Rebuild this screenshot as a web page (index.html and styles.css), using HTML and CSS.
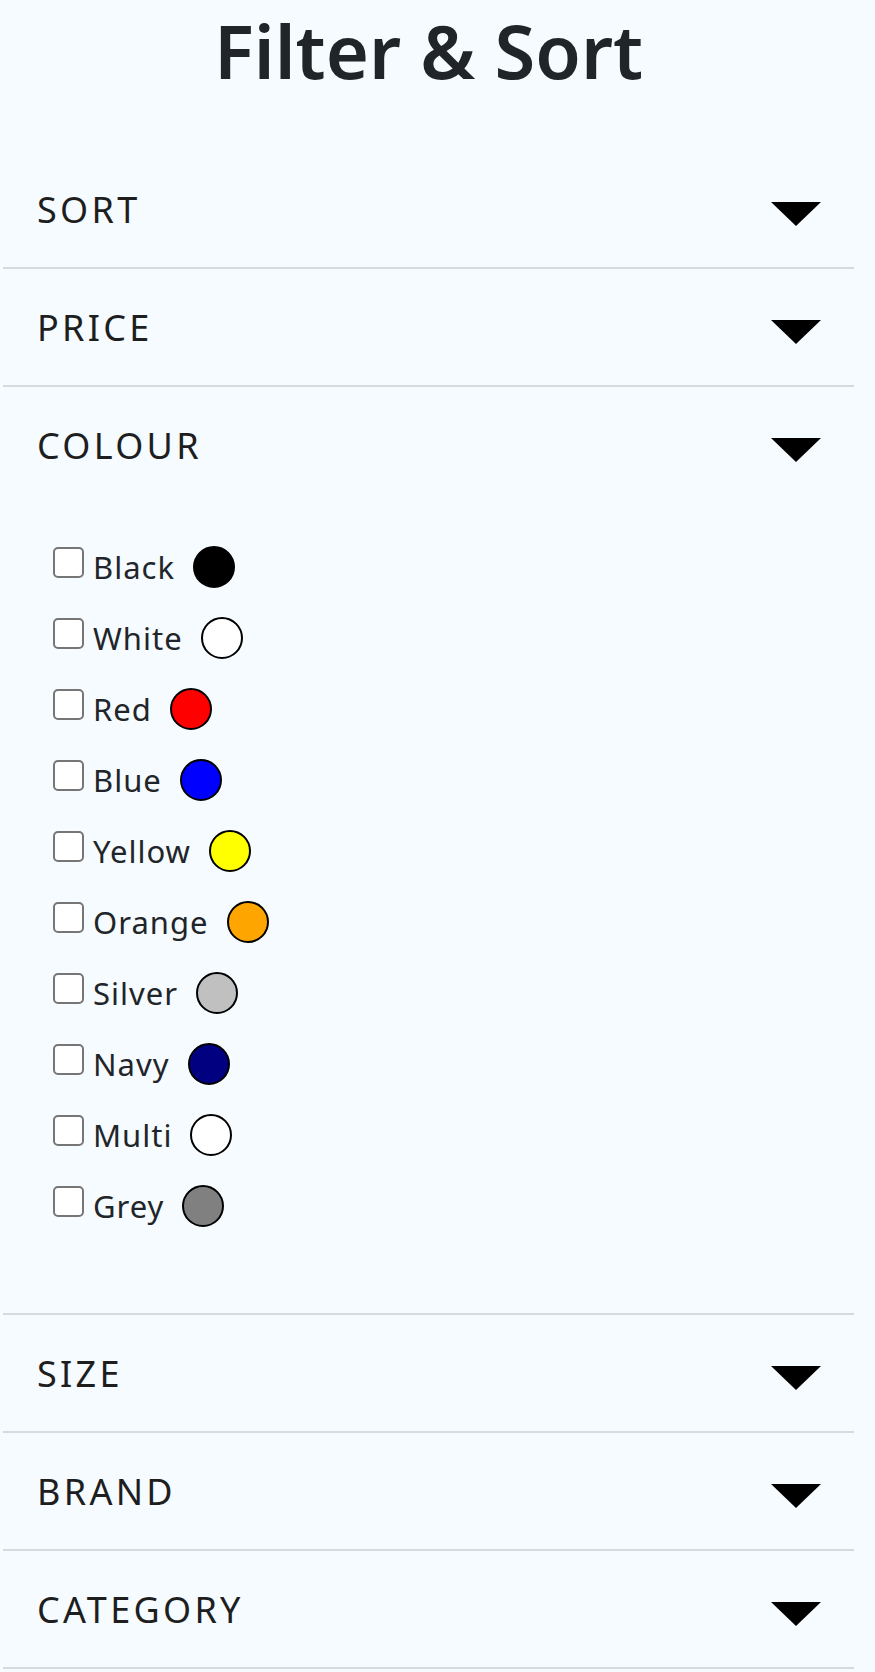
FILE: index.html
```html
<!DOCTYPE html>
<html lang="en">
<head>
    <meta charset="UTF-8">
    <meta name="viewport" content="width=device-width, initial-scale=1.0">
    <title>Filter &amp; Sort</title>
    <link rel="stylesheet" href="styles.css">
</head>
<body>

<div id="filters">
    <h1 class="title">Filter &amp; Sort</h1>

    <div class="filter-list">
        <div class="filter">
            <div class="filter-head">
                <span class="filter-name">SORT</span>
                <span class="caret"></span>
            </div>
        </div>

        <div class="filter">
            <div class="filter-head">
                <span class="filter-name">PRICE</span>
                <span class="caret"></span>
            </div>
        </div>

        <div class="filter">
            <div class="filter-head">
                <span class="filter-name">COLOUR</span>
                <span class="caret"></span>
            </div>
            <ul class="colour-list">
                <li><input type="checkbox" id="c-black"><label for="c-black">Black</label><span class="swatch" style="background:#000000"></span></li>
                <li><input type="checkbox" id="c-white"><label for="c-white">White</label><span class="swatch" style="background:#ffffff"></span></li>
                <li><input type="checkbox" id="c-red"><label for="c-red">Red</label><span class="swatch" style="background:#ff0000"></span></li>
                <li><input type="checkbox" id="c-blue"><label for="c-blue">Blue</label><span class="swatch" style="background:#0000ff"></span></li>
                <li><input type="checkbox" id="c-yellow"><label for="c-yellow">Yellow</label><span class="swatch" style="background:#ffff00"></span></li>
                <li><input type="checkbox" id="c-orange"><label for="c-orange">Orange</label><span class="swatch" style="background:#ffa500"></span></li>
                <li><input type="checkbox" id="c-silver"><label for="c-silver">Silver</label><span class="swatch" style="background:#c0c0c0"></span></li>
                <li><input type="checkbox" id="c-navy"><label for="c-navy">Navy</label><span class="swatch" style="background:#000080"></span></li>
                <li><input type="checkbox" id="c-multi"><label for="c-multi">Multi</label><span class="swatch" style="background:#ffffff"></span></li>
                <li><input type="checkbox" id="c-grey"><label for="c-grey">Grey</label><span class="swatch" style="background:#808080"></span></li>
            </ul>
        </div>

        <div class="filter">
            <div class="filter-head">
                <span class="filter-name">SIZE</span>
                <span class="caret"></span>
            </div>
        </div>

        <div class="filter">
            <div class="filter-head">
                <span class="filter-name">BRAND</span>
                <span class="caret"></span>
            </div>
        </div>

        <div class="filter">
            <div class="filter-head">
                <span class="filter-name">CATEGORY</span>
                <span class="caret"></span>
            </div>
        </div>
    </div>
</div>

</body>
</html>
```

FILE: styles.css
```css
body {
    font-family: 'Noto Sans', sans-serif;
    margin: 0;
    padding: 0;
    background-color: #f5fbfe;
    color: #212529;
}

#filters {
    display: flex;
    flex-direction: column;
    margin: 0 21px 0 3px;
}

.title {
    margin: 0 0 50px 0;
    padding-top: 1px;
    font-size: 74px;
    line-height: 100px;
    font-weight: 600;
    text-align: center;
}

.filter {
    border-bottom: 2px solid #d6dadd;
}

.filter-head {
    display: flex;
    align-items: center;
    justify-content: space-between;
    height: 116px;
    padding: 0 33px 0 34px;
}

.filter-name {
    font-size: 36px;
    letter-spacing: 3.3px;
    color: #1e1e1e;
}

.caret {
    width: 0;
    height: 0;
    margin-top: 10px;
    border-left: 25px solid transparent;
    border-right: 25px solid transparent;
    border-top: 24px solid #000;
}

.colour-list {
    list-style: none;
    margin: 0;
    padding: 28px 0 72px 50px;
}

.colour-list li {
    display: flex;
    align-items: center;
    height: 71px;
}

.colour-list input {
    appearance: none;
    width: 31px;
    height: 31px;
    margin: 0 0 8px 0;
    border: 2px solid #767676;
    border-radius: 5px;
    background-color: #fff;
}

.colour-list label {
    margin-left: 9px;
    font-size: 31px;
    letter-spacing: 1px;
}

.swatch {
    width: 38px;
    height: 38px;
    margin-left: 18px;
    border: 2px solid #000;
    border-radius: 50%;
}
```
